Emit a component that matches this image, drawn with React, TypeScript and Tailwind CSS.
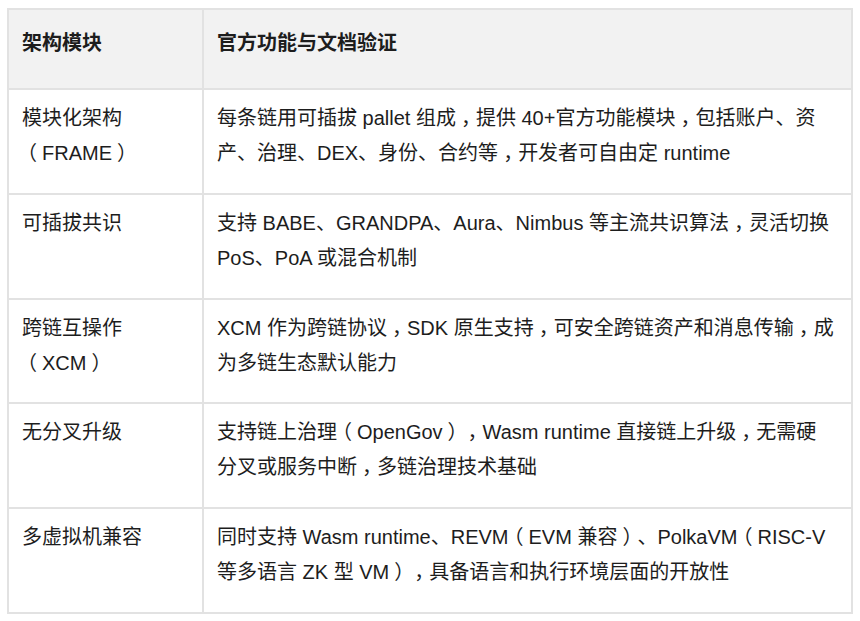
const rows: { name: string[]; desc: string[] }[] = [
  {
    name: ["模块化架构", "（FRAME）"],
    desc: [
      "每条链用可插拔 pallet 组成，提供 40+官方功能模块，包括账户、资",
      "产、治理、DEX、身份、合约等，开发者可自由定 runtime",
    ],
  },
  {
    name: ["可插拔共识"],
    desc: [
      "支持 BABE、GRANDPA、Aura、Nimbus 等主流共识算法，灵活切换",
      "PoS、PoA 或混合机制",
    ],
  },
  {
    name: ["跨链互操作", "（XCM）"],
    desc: [
      "XCM 作为跨链协议，SDK 原生支持，可安全跨链资产和消息传输，成",
      "为多链生态默认能力",
    ],
  },
  {
    name: ["无分叉升级"],
    desc: [
      "支持链上治理（OpenGov），Wasm runtime 直接链上升级，无需硬",
      "分叉或服务中断，多链治理技术基础",
    ],
  },
  {
    name: ["多虚拟机兼容"],
    desc: [
      "同时支持 Wasm runtime、REVM（EVM 兼容）、PolkaVM（RISC-V",
      "等多语言 ZK 型 VM），具备语言和执行环境层面的开放性",
    ],
  },
];

// the reference centres full-width punctuation: half-width glyph + margins
const Line = ({ text }: { text: string }) => (
  <div className="whitespace-nowrap">
    {text.split(/([，（）])/).map((part, i) =>
      /^[，（）]$/.test(part) ? (
        <span key={i} className="mx-[0.25em] [font-feature-settings:'halt']">
          {part}
        </span>
      ) : (
        part
      )
    )}
  </div>
);

export default function App() {
  return (
    <div className="min-h-[621px] bg-white pl-[7px] pt-[8px] font-['Liberation_Sans','Noto_Sans_CJK_SC',sans-serif] text-[20px] leading-[35px] text-[#1d1d1d] [text-spacing-trim:space-all]">
      <table className="w-[846px] border-collapse border-2 border-[#e2e2e2]">
        <thead>
          <tr className="h-[80px] bg-[#f2f2f2]">
            <th className="w-[195px] border-2 border-[#e2e2e2] px-[13px] pt-[16px] pb-[25px] text-left align-top font-bold">
              架构模块
            </th>
            <th className="border-2 border-[#e2e2e2] px-[13px] pt-[16px] pb-[25px] text-left align-top font-bold">
              官方功能与文档验证
            </th>
          </tr>
        </thead>
        <tbody>
          {rows.map((r, i) => (
            <tr key={i} className="h-[104.8px]">
              <td className="border-2 border-[#e2e2e2] px-[13px] pt-[11px] pb-[20px] align-top">
                {r.name.map((t, j) => (
                  <Line key={j} text={t} />
                ))}
              </td>
              <td className="border-2 border-[#e2e2e2] px-[13px] pt-[11px] pb-[20px] align-top">
                {r.desc.map((t, j) => (
                  <Line key={j} text={t} />
                ))}
              </td>
            </tr>
          ))}
        </tbody>
      </table>
    </div>
  );
}
